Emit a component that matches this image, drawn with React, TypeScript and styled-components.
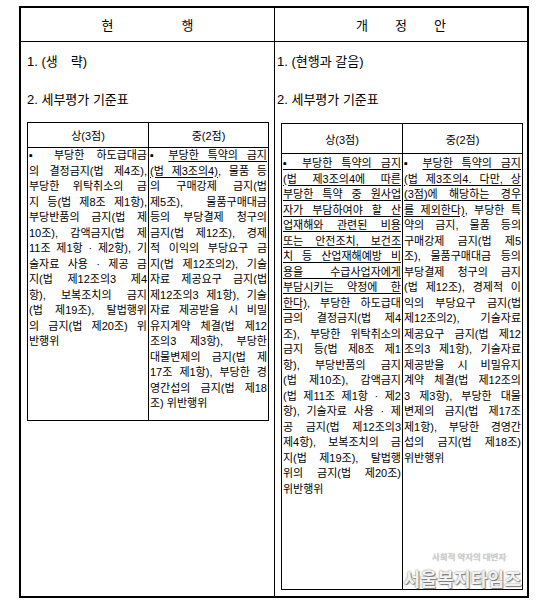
import React from 'react'
import styled, { createGlobalStyle } from 'styled-components'

const GlobalStyle = createGlobalStyle`
  html, body {
    margin: 0;
    padding: 0;
    background: #fff;
  }
  body {
    font-family: 'Liberation Sans', 'Noto Sans CJK KR', sans-serif;
    color: #000;
  }
`

// page
const Page = styled.div`
  position: relative;
  width: 539px;
  height: 608px;
  box-sizing: border-box;
  padding: 6px 0 0 19px;
`

// two column compare table (현행 / 개정안)
const Compare = styled.div`
  width: 510px;
  box-sizing: border-box;
  border: 2px solid #000;
  display: grid;
  grid-template-columns: 253px 253px;
  grid-template-rows: 34px 554px;
`

const HeadCell = styled.div<{ $right?: boolean; $gap: number }>`
  box-sizing: border-box;
  display: flex;
  justify-content: center;
  align-items: center;
  gap: ${p => p.$gap}px;
  font-size: 13px;
  border-bottom: 1px solid #000;
  border-left: ${p => (p.$right ? '1px solid #000' : 'none')};
`

const BodyCol = styled.div<{ $right?: boolean; $padL: number }>`
  box-sizing: border-box;
  display: flex;
  flex-direction: column;
  align-items: flex-start;
  padding: 10px 0 6px ${p => p.$padL}px;
  border-left: ${p => (p.$right ? '1px solid #000' : 'none')};
`

const Clause = styled.div<{ $mb: number }>`
  font-size: 13px;
  line-height: 20px;
  white-space: pre;
  margin-bottom: ${p => p.$mb}px;
`

// 세부평가 기준표
const Criteria = styled.div<{ $fill?: boolean; $shift: number }>`
  display: grid;
  grid-template-columns: 120px 120px;
  grid-template-rows: auto ${p => (p.$fill ? '1fr' : 'auto')};
  border: 1px solid #000;
  margin-left: ${p => p.$shift}px;
  flex: ${p => (p.$fill ? 1 : 'none')};
`

const GradeHead = styled.div<{ $second?: boolean; $h: number }>`
  box-sizing: border-box;
  height: ${p => p.$h}px;
  display: flex;
  align-items: center;
  justify-content: center;
  font-size: 11px;
  border-bottom: 1px solid #000;
  border-left: ${p => (p.$second ? '1px solid #000' : 'none')};
`

const GradeBody = styled.div<{ $second?: boolean; $padTop: number }>`
  box-sizing: border-box;
  padding: ${p => p.$padTop}px 1px 8px 1px;
  font-size: 11px;
  line-height: 15.5px;
  border-left: ${p => (p.$second ? '1px solid #000' : 'none')};
`

const Line = styled.div<{ $last?: boolean }>`
  white-space: nowrap;
  text-align: justify;
  text-align-last: ${p => (p.$last ? 'left' : 'justify')};
`

const U = styled.span`
  text-decoration: underline;
  text-underline-offset: 2px;
`

// watermark
const Watermark = styled.div`
  position: absolute;
  right: 18px;
  bottom: 16px;
  display: flex;
  flex-direction: column;
  align-items: center;
  font-family: 'Noto Sans CJK KR', sans-serif;
  pointer-events: none;
`

const Slogan = styled.div`
  font-size: 8.5px;
  line-height: 13px;
  color: #d6d6d6;
  text-shadow: 0 0 1px #8a8a8a;
  margin: 0 0 2px 14px;
`

const Brand = styled.div`
  font-size: 18.5px;
  line-height: 27px;
  font-weight: 700;
  letter-spacing: -0.2px;
  color: #f2f2f2;
  text-shadow: 0 0 2px #707070, 1px 1px 1px #808080;
`

const cur1 = [
  '▪ 부당한 하도급대금',
  '의 결정금지(법 제4조),',
  '부당한 위탁취소의 금',
  '지 등(법 제8조 제1항),',
  '부당반품의 금지(법 제',
  '10조), 감액금지(법 제',
  '11조 제1항 · 제2항), 기',
  '술자료 사용 · 제공 금',
  '지(법 제12조의3 제4',
  '항), 보복조치의 금지',
  '(법 제19조), 탈법행위',
  '의 금지(법 제20조) 위',
  '반행위',
]

const cur2 = [
  '▪ {부당한 특약의 금지}',
  '{(법 제3조의4)}, 물품 등',
  '의 구매강제 금지(법',
  '제5조), 물품구매대금',
  '등의 부당결제 청구의',
  '금지(법 제12조), 경제',
  '적 이익의 부당요구 금',
  '지(법 제12조의2), 기술',
  '자료 제공요구 금지(법',
  '제12조의3 제1항), 기술',
  '자료 제공받을 시 비밀',
  '유지계약 체결(법 제12',
  '조의3 제3항), 부당한',
  '대물변제의 금지(법 제',
  '17조 제1항), 부당한 경',
  '영간섭의 금지(법 제18',
  '조) 위반행위',
]

const new1 = [
  '{▪ 부당한 특약의 금지}',
  '{(법 제3조의4에 따른}',
  '{부당한 특약 중 원사업}',
  '{자가 부담하여야 할 산}',
  '{업재해와 관련된 비용}',
  '{또는 안전조치, 보건조}',
  '{치 등 산업재해예방 비}',
  '{용을 수급사업자에게}',
  '{부담시키는 약정에 한}',
  '{한다)}, 부당한 하도급대',
  '금의 결정금지(법 제4',
  '조), 부당한 위탁취소의',
  '금지 등(법 제8조 제1',
  '항), 부당반품의 금지',
  '(법 제10조), 감액금지',
  '(법 제11조 제1항 · 제2',
  '항), 기술자료 사용 · 제',
  '공 금지(법 제12조의3',
  '제4항), 보복조치의 금',
  '지(법 제19조), 탈법행',
  '위의 금지(법 제20조)',
  '위반행위',
]

const new2 = [
  '▪ {부당한 특약의 금지}',
  '{(법 제3조의4. 다만, 상}',
  '{(3점)에 해당하는 경우}',
  '{를 제외한다)}, 부당한 특',
  '약의 금지, 물품 등의',
  '구매강제 금지(법 제5',
  '조), 물품구매대금 등의',
  '부당결제 청구의 금지',
  '(법 제12조), 경제적 이',
  '익의 부당요구 금지(법',
  '제12조의2), 기술자료',
  '제공요구 금지(법 제12',
  '조의3 제1항), 기술자료',
  '제공받을 시 비밀유지',
  '계약 체결(법 제12조의',
  '3 제3항), 부당한 대물',
  '변제의 금지(법 제17조',
  '제1항), 부당한 경영간',
  '섭의 금지(법 제18조)',
  '위반행위',
]

// {..} 부분은 밑줄
const renderLine = (text: string) =>
  text.split(/(\{[^}]*\})/).map((part, i) =>
    part.startsWith('{') ? <U key={i}>{part.slice(1, -1)}</U> : <React.Fragment key={i}>{part}</React.Fragment>
  )

const Lines: React.FC<{ lines: string[] }> = ({ lines }) => (
  <>
    {lines.map((l, i) => (
      <Line key={i} $last={i === lines.length - 1}>
        {renderLine(l)}
      </Line>
    ))}
  </>
)

const App: React.FC = () => {
  return (
    <Page>
      <GlobalStyle />
      <Compare>
        <HeadCell $gap={68}>
          <span>현</span>
          <span>행</span>
        </HeadCell>
        <HeadCell $right $gap={27}>
          <span>개</span>
          <span>정</span>
          <span>안</span>
        </HeadCell>

        {/* 현행 */}
        <BodyCol $padL={6}>
          <Clause $mb={18}>{'1. (생\u3000략)'}</Clause>
          <Clause $mb={12}>2. 세부평가 기준표</Clause>
          <Criteria $shift={0}>
            <GradeHead $h={25}>상(3점)</GradeHead>
            <GradeHead $second $h={25}>중(2점)</GradeHead>
            <GradeBody $padTop={0}>
              <Lines lines={cur1} />
            </GradeBody>
            <GradeBody $second $padTop={0}>
              <Lines lines={cur2} />
            </GradeBody>
          </Criteria>
        </BodyCol>

        {/* 개정안 */}
        <BodyCol $right $padL={2}>
          <Clause $mb={18}>1. (현행과 갈음)</Clause>
          <Clause $mb={13}>2. 세부평가 기준표</Clause>
          <Criteria $fill $shift={4}>
            <GradeHead $h={30}>상(3점)</GradeHead>
            <GradeHead $second $h={30}>중(2점)</GradeHead>
            <GradeBody $padTop={2}>
              <Lines lines={new1} />
            </GradeBody>
            <GradeBody $second $padTop={2}>
              <Lines lines={new2} />
            </GradeBody>
          </Criteria>
        </BodyCol>
      </Compare>

      <Watermark>
        <Slogan>사회적 약자의 대변자</Slogan>
        <Brand>서울복지타임즈</Brand>
      </Watermark>
    </Page>
  )
}

export default App
